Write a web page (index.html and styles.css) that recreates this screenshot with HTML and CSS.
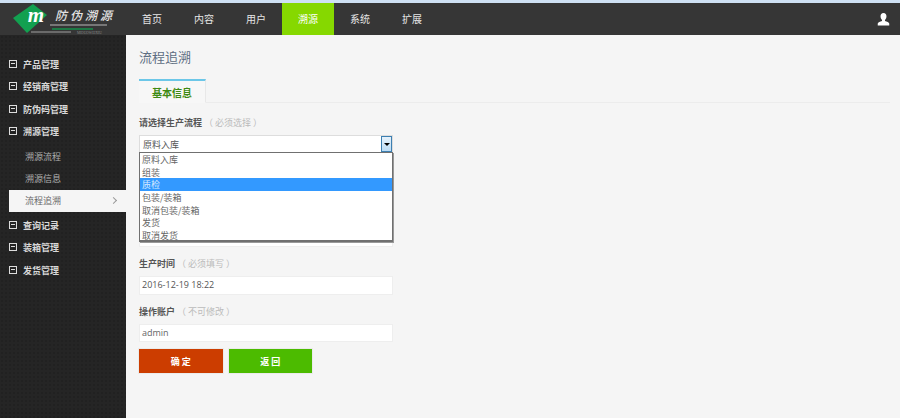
FILE: index.html
```html
<!DOCTYPE html>
<html lang="zh">
<head>
<meta charset="utf-8">
<title>流程追溯</title>
<link rel="stylesheet" href="styles.css">
</head>
<body>
<div class="strip"></div>
<header class="header">
  <div class="logo">
    <svg class="logo-mark" width="126" height="32" viewBox="0 0 126 32">
      <polygon points="13,15 33,1 47,12 27,30" fill="#12a050"/>
      <text x="36" y="19" class="logo-m">m</text>
      <path d="M50 22H107" stroke="#b8b8b8" stroke-width="1"/>
      <path d="M52 26H93" stroke="#1d7a45" stroke-width="2"/>
      <path d="M31 29H71" stroke="#a0a0a0" stroke-width="1"/>
      <text x="77" y="31" class="logo-small">MIDUOWEIXIU</text>
    </svg>
    <span class="logo-name">防伪溯源</span>
  </div>
  <nav class="nav">
    <a class="nav-item">首页</a>
    <a class="nav-item">内容</a>
    <a class="nav-item">用户</a>
    <a class="nav-item active">溯源</a>
    <a class="nav-item">系统</a>
    <a class="nav-item">扩展</a>
  </nav>
  <svg class="user" width="13" height="13" viewBox="0 0 14 14">
    <path d="M7 0C4.9 0 3.8 1.5 3.8 3.6C3.8 5.4 4.6 6.8 5.4 7.5V8.6C3.4 9.3 1 10 .8 11.4V13.5H13.2V11.4C13 10 10.6 9.3 8.6 8.6V7.5C9.4 6.8 10.2 5.4 10.2 3.6C10.2 1.5 9.1 0 7 0Z" fill="#fff"/>
  </svg>
</header>
<div class="body">
  <aside class="side">
    <div class="menu top">
      <div class="group"><i class="box"></i>产品管理</div>
      <div class="group"><i class="box"></i>经销商管理</div>
      <div class="group"><i class="box"></i>防伪码管理</div>
      <div class="group"><i class="box"></i>溯源管理</div>
      <div class="sub first">溯源流程</div>
      <div class="sub">溯源信息</div>
      <div class="sub current">流程追溯<span class="chev"></span></div>
      <div class="group after"><i class="box"></i>查询记录</div>
      <div class="group"><i class="box"></i>装箱管理</div>
      <div class="group"><i class="box"></i>发货管理</div>
    </div>
  </aside>
  <main class="main">
    <h1 class="title">流程追溯</h1>
    <div class="tabs"><span class="tab">基本信息</span></div>
    <form class="form">
      <div class="label first-label">请选择生产流程<span class="hint">（ 必须选择 ）</span></div>
      <div class="select-wrap">
        <div class="select">
          <span>原料入库</span>
          <span class="select-btn"></span>
        </div>
        <ul class="options">
          <li>原料入库</li>
          <li>组装</li>
          <li class="hl">质检</li>
          <li>包装/装箱</li>
          <li>取消包装/装箱</li>
          <li>发货</li>
          <li>取消发货</li>
        </ul>
        <div class="under"></div>
      </div>
      <div class="label">生产时间<span class="hint">（ 必须填写 ）</span></div>
      <div class="input">2016-12-19 18:22</div>
      <div class="label">操作账户<span class="hint">（ 不可修改 ）</span></div>
      <div class="input grey">admin</div>
      <div class="buttons">
        <button type="button" class="btn red">确 定</button>
        <button type="button" class="btn green">返 回</button>
      </div>
    </form>
  </main>
</div>
</body>
</html>
```
FILE: styles.css
```css
* { box-sizing: border-box; }
html, body { margin: 0; padding: 0; height: 100%; overflow: hidden; }
body { font-family: "Noto Sans CJK SC", "Liberation Sans", sans-serif; font-size: 9px; background: #f5f5f5; color: #555; }
.strip { height: 3px; background: #cfe1f3; }
.header { height: 32px; background: #363636; display: flex; align-items: center; position: relative; }
.logo { width: 126px; height: 32px; position: relative; flex: none; }
.logo-mark { display: block; }
.logo-m { font-family: "Liberation Serif", serif; font-style: italic; font-weight: 700; font-size: 21px; fill: #fff; text-anchor: middle; }
.logo-small { font-family: "Liberation Serif", serif; font-size: 3.5px; fill: #888; }
.logo-name { position: absolute; left: 55px; top: 4px; color: #e4e4e4; font-size: 12px; line-height: 16px; letter-spacing: 3px; font-style: italic; font-weight: 500; }
.nav { display: flex; height: 32px; }
.nav-item { width: 52px; line-height: 32px; text-align: center; color: #e6e6e6; font-size: 10px; }
.nav-item.active { background: #86d800; color: #fff; }
.user { margin-left: auto; margin-right: 10px; }
.body { display: flex; height: 383px; }
.side { width: 126px; flex: none; background-color: #252525; background-image: radial-gradient(#212121 1px, transparent 1px); background-size: 4px 4px; padding-top: 19px; }
.group { height: 22.3px; line-height: 22px; padding-left: 23px; color: #d8d8d8; font-size: 9px; font-weight: 700; position: relative; }
.box { position: absolute; left: 9px; top: 6px; width: 8px; height: 8px; border: 1px solid #ddd; }
.box::after { content: ""; position: absolute; left: 1px; right: 1px; top: 2px; height: 1px; background: #ddd; }
.sub { height: 22px; line-height: 22px; margin-left: 9px; padding-left: 16px; color: #b0b0b0; font-size: 9px; position: relative; }
.sub.first { margin-top: 3px; }
.sub.current { background: #f5f5f5; color: #666; }
.group.after { margin-top: 3px; }
.chev { position: absolute; right: 10px; top: 8px; width: 5px; height: 5px; border-top: 1px solid #999; border-right: 1px solid #999; transform: rotate(45deg); }
.main { flex: 1; padding: 0 10px 0 13px; min-width: 0; }
.title { margin: 0; font-size: 13px; line-height: 18px; font-weight: 400; color: #5d6d82; padding-top: 13px; }
.tabs { margin-top: 13px; height: 24px; border-bottom: 1px solid #ececec; }
.tab { display: block; width: 67px; height: 24px; background: #f7f7f7; border-top: 2px solid #6cc7e8; border-right: 1px solid #e8e8e8; border-bottom: 1px solid #f7f7f7; text-align: center; line-height: 23px; font-weight: 700; font-size: 10px; color: #3d8a12; }
.form { width: 254px; }
.label { font-size: 9px; font-weight: 700; color: #555; line-height: 14px; margin-top: 10px; height: 14px; }
.first-label { margin-top: 13px; }
.hint { font-weight: 400; color: #bbb; margin-left: 2px; }
.select-wrap { position: relative; margin-top: 5px; height: 112px; margin-bottom: 10px; }
.select { height: 18px; background: #fff; border: 1px solid #ddd; display: flex; align-items: center; padding-left: 3px; color: #555; position: relative; }
.select-btn { position: absolute; right: 0; top: 0; width: 11px; height: 16px; background: linear-gradient(#e6f2fb, #bcdcf4); border: 1px solid #3c7fb1; }
.select-btn::after { content: ""; position: absolute; left: 2px; top: 6px; border: 3px solid transparent; border-top: 3px solid #000; }
.under { position: absolute; left: 0; right: 0; top: 90px; height: 22px; background: #fff; border: 1px solid #eee; }
.options { position: absolute; z-index: 1; left: 0; right: 0; top: 17px; height: 90px; margin: 0; padding: 0; list-style: none; background: #fff; border: 1px solid #707070; border-bottom-width: 2px; box-shadow: 1px 1px 0 #999; }
.options li { height: 12.7px; line-height: 14.5px; padding-left: 2px; color: #666; font-size: 9px; }
.options li.hl { background: #3399ff; color: #dcecff; }
.input { height: 18.5px; background: #fff; border: 1px solid #eee; margin-top: 5px; padding-left: 2px; line-height: 16px; font-size: 9px; color: #555; font-family: "Open Sans", sans-serif; }
.input.grey { color: #666; }
.buttons { display: flex; gap: 6px; margin-top: 7px; }
.btn { width: 83.5px; height: 24px; border: 0; box-shadow: 0 0 0 1px #ebebeb; color: #fff; font: 700 9px "Noto Sans CJK SC", sans-serif; padding: 0; }
.btn.red { background: #cc3d00; }
.btn.green { background: #4cbb00; }
```
